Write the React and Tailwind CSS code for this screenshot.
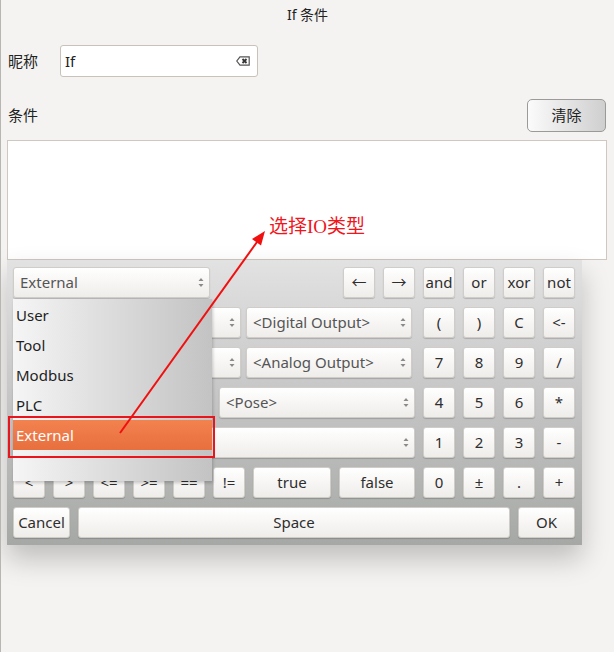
import React from "react";

const FONT = "font-['Noto_Sans','Noto_Sans_CJK_SC',sans-serif]";

function Arrows() {
  return (
    <svg width="6" height="11" viewBox="0 0 6 11" className="shrink-0">
      <path d="M0.5 4 L3 1 L5.5 4 Z" fill="#8a8a8a" />
      <path d="M0.5 7 L3 10 L5.5 7 Z" fill="#8a8a8a" />
    </svg>
  );
}

function Key({ className = "w-8", children }) {
  return (
    <div
      className={
        "h-[31px] shrink-0 flex items-center justify-center rounded-[3px] border border-[#d0cdc9] bg-linear-to-b from-[#ffffff] to-[#efedea] text-[15px] text-[#2e2e2e] shadow-[0_1px_1px_rgba(0,0,0,0.18)] " +
        className
      }
    >
      {children}
    </div>
  );
}

function Combo({ className, label }) {
  return (
    <div
      className={
        "h-[31px] shrink-0 flex items-center justify-between pl-[6px] pr-[5px] rounded-[3px] border border-[#d0cdc9] bg-linear-to-b from-[#ffffff] to-[#efedea] text-[15px] text-[#555] shadow-[0_1px_1px_rgba(0,0,0,0.18)] " +
        className
      }
    >
      <span>{label}</span>
      <Arrows />
    </div>
  );
}

function OpKeys({ keys }) {
  return (
    <div className="ml-auto flex gap-2">
      {keys.map((k) => (
        <Key key={k}>{k}</Key>
      ))}
    </div>
  );
}

const IO_TYPES = ["User", "Tool", "Modbus", "PLC", "External"];

export default function App() {
  return (
    <div className={"relative w-[614px] h-[652px] overflow-hidden bg-[#f4f3f1] border-l border-[#b8b6b3] text-[#222] " + FONT}>
      <div className="h-[29px] flex items-center justify-center text-[14px] text-[#222]">If 条件</div>

      <div className="mt-[16px] h-[32px] flex items-center pl-[7px]">
        <span className="w-[52px] text-[15px]">昵称</span>
        <div className="w-[198px] h-[32px] flex items-center justify-between pl-[4px] pr-[7px] bg-white border border-[#c9c2ba] rounded-[3px]">
          <span className="text-[15px] text-[#222]">If</span>
          <svg width="14" height="10" viewBox="0 0 14 10">
            <path d="M4 0.8 H13.2 V9.2 H4 L0.8 5 Z" fill="none" stroke="#555" strokeWidth="1.2" />
            <path d="M6.5 3 L10.5 7 M10.5 3 L6.5 7" stroke="#333" strokeWidth="1.8" />
          </svg>
        </div>
      </div>

      <div className="mt-[22px] h-[33px] flex items-center justify-between pl-[7px] pr-[8px]">
        <span className="text-[15px]">条件</span>
        <div className="w-[79px] h-[33px] flex items-center justify-center rounded-[5px] border border-[#9c9a98] bg-linear-to-r from-[#fbfbfb] to-[#cfcfcf] text-[15px]">
          清除
        </div>
      </div>

      <div className="mt-[8px] ml-[6px] w-[600px] h-[120px] bg-white border border-[#cfc8c0]" />

      <div className="ml-[6px] w-[575px] h-[285px] pl-[6px] pr-[7px] py-[7px] flex flex-col gap-[9px] bg-linear-to-b from-[#e2e2e2] to-[#a6a8a6] shadow-[0_14px_26px_rgba(0,0,0,0.22)]">
        <div className="flex">
          <Combo className="w-[197px]" label="External" />
          <OpKeys keys={["←", "→", "and", "or", "xor", "not"]} />
        </div>
        <div className="flex gap-[5px]">
          <Combo className="w-[228px]" label="" />
          <Combo className="w-[166px]" label="<Digital Output>" />
          <OpKeys keys={["(", ")", "C", "<-"]} />
        </div>
        <div className="flex gap-[5px]">
          <Combo className="w-[228px]" label="" />
          <Combo className="w-[166px]" label="<Analog Output>" />
          <OpKeys keys={["7", "8", "9", "/"]} />
        </div>
        <div className="flex gap-2">
          <Combo className="w-[198px]" label="" />
          <Combo className="w-[196px]" label="<Pose>" />
          <OpKeys keys={["4", "5", "6", "*"]} />
        </div>
        <div className="flex">
          <Combo className="w-[402px]" label="" />
          <OpKeys keys={["1", "2", "3", "-"]} />
        </div>
        <div className="flex gap-2">
          {["<", ">", "<=", ">=", "==", "!="].map((k) => (
            <Key key={k}>{k}</Key>
          ))}
          <Key className="w-[78px]">true</Key>
          <Key className="w-[76px]">false</Key>
          {["0", "±", ".", "+"].map((k) => (
            <Key key={k}>{k}</Key>
          ))}
        </div>
        <div className="flex gap-2">
          <Key className="w-[57px]">Cancel</Key>
          <Key className="flex-1">Space</Key>
          <Key className="w-[57px]">OK</Key>
        </div>
      </div>

      {/* open IO type list */}
      <div className="absolute left-[12px] top-[299px] w-[199px] h-[182px] pt-px bg-linear-to-r from-[#f5f5f5] to-[#c3c3c3] shadow-[1px_2px_3px_rgba(0,0,0,0.2)]">
        {IO_TYPES.map((t) =>
          t === "External" ? (
            <div key={t} className="h-[30px] flex items-center pl-[3px] text-[15px] text-white bg-linear-to-b from-[#f2824f] to-[#e86f3e]">
              {t}
            </div>
          ) : (
            <div key={t} className="h-[30px] flex items-center pl-[3px] text-[15px] text-[#1e1e1e]">
              {t}
            </div>
          )
        )}
      </div>

      {/* annotation */}
      <div className="absolute left-[7px] top-[416px] w-[207px] h-[42px] border-2 border-[#e8161c]" />
      <svg className="absolute left-0 top-0 pointer-events-none" width="614" height="652">
        <line x1="119" y1="433" x2="256" y2="242" stroke="#f01010" strokeWidth="2" />
        <polygon points="264,231 260,245.5 251,239" fill="#f01010" />
      </svg>
      <div className="absolute left-[268px] top-[215px] text-[19px] leading-[24px] text-[#f0161c] font-['Liberation_Serif','Noto_Sans_CJK_SC',serif]">
        选择IO类型
      </div>
    </div>
  );
}
